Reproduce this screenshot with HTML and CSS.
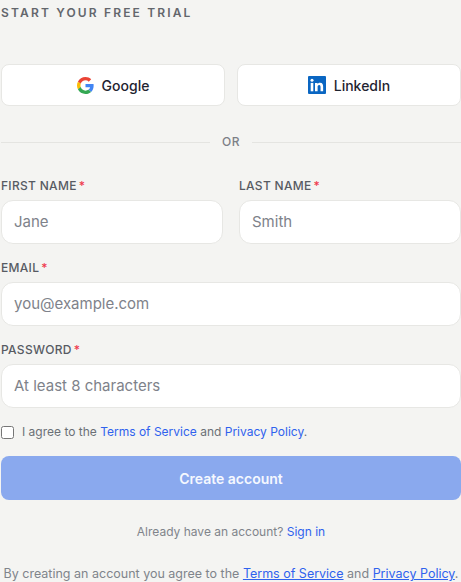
FILE: index.html
```html
<!DOCTYPE html>
<html lang="en">
<head>
<meta charset="utf-8">
<title>Start your free trial</title>
<link rel="stylesheet" href="styles.css">
</head>
<body>
<main class="page">
  <p class="eyebrow">START YOUR FREE TRIAL</p>
  <div class="social">
    <button class="social-btn" type="button">
      <svg class="icon" viewBox="0 0 48 48" aria-hidden="true">
        <path fill="#EA4335" d="M24 9.5c3.54 0 6.71 1.22 9.21 3.6l6.85-6.85C35.9 2.38 30.47 0 24 0 14.62 0 6.51 5.38 2.56 13.22l7.98 6.19C12.43 13.72 17.74 9.5 24 9.5z"/>
        <path fill="#4285F4" d="M46.98 24.55c0-1.57-.15-3.09-.38-4.55H24v9.02h12.94c-.58 2.96-2.26 5.48-4.78 7.18l7.73 6c4.51-4.18 7.09-10.36 7.09-17.65z"/>
        <path fill="#FBBC05" d="M10.53 28.59c-.48-1.45-.76-2.99-.76-4.59s.27-3.14.76-4.59l-7.98-6.19C.92 16.46 0 20.12 0 24c0 3.88.92 7.54 2.56 10.78l7.97-6.19z"/>
        <path fill="#34A853" d="M24 48c6.48 0 11.93-2.13 15.89-5.81l-7.73-6c-2.15 1.45-4.92 2.3-8.16 2.3-6.26 0-11.57-4.22-13.47-9.91l-7.98 6.19C6.51 42.62 14.62 48 24 48z"/>
      </svg>
      <span>Google</span>
    </button>
    <button class="social-btn" type="button">
      <svg class="icon icon-li" viewBox="0 0 18 18" aria-hidden="true">
        <rect width="18" height="18" rx="1" fill="#0A66C2"/>
        <rect x="2.7" y="6.9" width="2.6" height="8.4" fill="#fff"/>
        <circle cx="4" cy="4.2" r="1.5" fill="#fff"/>
        <path fill="#fff" d="M7 6.9h2.5v1.15h.04c.35-.66 1.2-1.36 2.47-1.36 2.64 0 3.13 1.74 3.13 4v4.61h-2.6v-4.09c0-.98-.02-2.23-1.36-2.23-1.36 0-1.57 1.06-1.57 2.16v4.16H7z"/>
      </svg>
      <span>LinkedIn</span>
    </button>
  </div>
  <div class="divider"><span>OR</span></div>
  <form class="form">
    <div class="name-row">
      <div class="field">
        <label class="label" for="first">FIRST NAME<span class="req">*</span></label>
        <input class="input" id="first" type="text" placeholder="Jane">
      </div>
      <div class="field">
        <label class="label" for="last">LAST NAME<span class="req">*</span></label>
        <input class="input" id="last" type="text" placeholder="Smith">
      </div>
    </div>
    <div class="field">
      <label class="label" for="email">EMAIL<span class="req">*</span></label>
      <input class="input" id="email" type="email" placeholder="you@example.com">
    </div>
    <div class="field">
      <label class="label" for="password">PASSWORD<span class="req">*</span></label>
      <input class="input" id="password" type="password" placeholder="At least 8 characters">
    </div>
    <label class="agree">
      <input class="check" type="checkbox">
      <span>I agree to the <a class="link" href="#">Terms of Service</a> and <a class="link" href="#">Privacy Policy</a>.</span>
    </label>
    <button class="submit" type="button">Create account</button>
  </form>
  <p class="signin">Already have an account? <a class="link" href="#">Sign in</a></p>
  <p class="legal">By creating an account you agree to the <a class="link under" href="#">Terms of Service</a> and <a class="link under" href="#">Privacy Policy</a>.</p>
</main>
</body>
</html>
```

FILE: styles.css
```css
* { box-sizing: border-box; }
html, body { margin: 0; height: 100%; overflow: hidden; }
body {
  background: #f4f4f2;
  font-family: Inter, "Liberation Sans", sans-serif;
  color: #6b7280;
}
.page { padding: 5px 0 0 1px; width: 461px; }
.eyebrow {
  margin: 0;
  font-size: 12px;
  line-height: 15px;
  font-weight: 600;
  letter-spacing: 2.16px;
  color: #63666c;
}
.social { display: grid; grid-template-columns: 1fr 1fr; gap: 12px; margin-top: 44px; }
.social-btn {
  height: 42px;
  display: flex;
  align-items: center;
  justify-content: center;
  gap: 8px;
  background: #fff;
  border: 1px solid #e7e7e4;
  border-radius: 8px;
  font: 450 14px Inter, sans-serif;
  color: #1f2430;
}
.icon { width: 17px; height: 17px; display: block; }
.icon-li { width: 18px; height: 18px; }
.divider {
  display: flex;
  align-items: center;
  gap: 12px;
  margin-top: 27px;
  font-size: 12px;
  line-height: 18px;
  font-weight: 500;
  letter-spacing: 0.05em;
  color: #7c8087;
}
.divider::before, .divider::after { content: ""; flex: 1; height: 1px; background: #e4e4e1; }
.form { display: flex; flex-direction: column; gap: 16px; margin-top: 27px; }
.name-row { display: grid; grid-template-columns: 1fr 1fr; gap: 16px; }
.field { display: flex; flex-direction: column; gap: 6px; }
.label {
  font-size: 12px;
  line-height: 16px;
  font-weight: 450;
  letter-spacing: 0.025em;
  color: #575b63;
}
.req { color: #ef3b4f; margin-left: 2px; }
.input {
  height: 44px;
  width: 100%;
  padding: 0 12px 2px;
  background: #fff;
  border: 1px solid #e7e7e4;
  border-radius: 12px;
  font: 400 15px Inter, sans-serif;
  color: #1f2430;
}
.input::placeholder { color: #7e828a; opacity: 1; }
.agree {
  display: flex;
  align-items: center;
  gap: 8px;
  margin-top: -1px;
  font-size: 12px;
  line-height: 18px;
  color: #6b7076;
}
.check { margin: 0; width: 13px; height: 13px; flex: none; }
.link { color: #2f62ee; text-decoration: none; }
.under { text-decoration: underline; }
.submit {
  height: 44px;
  width: 100%;
  margin-top: -1px;
  background: #8aa9ee;
  border: 0;
  border-radius: 8px;
  font: 600 14px Inter, sans-serif;
  color: #f5f8fe;
}
.signin {
  margin: 23px 0 0;
  text-align: center;
  font-size: 12px;
  line-height: 18px;
  color: #80848b;
}
.legal {
  margin: 24px 0 0;
  text-align: center;
  font-size: 12.5px;
  line-height: 18px;
  white-space: nowrap;
  color: #80848b;
}
```
